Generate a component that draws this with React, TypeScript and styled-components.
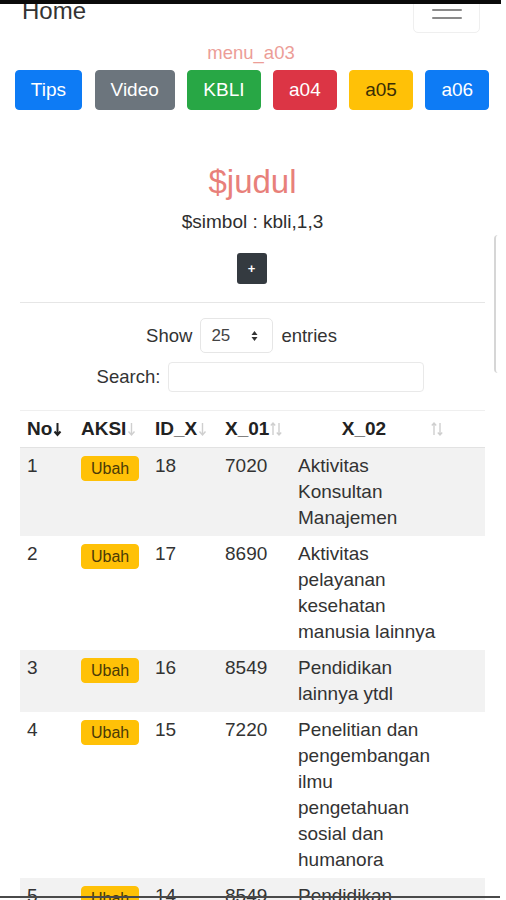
import React from "react";
import styled, { createGlobalStyle } from "styled-components";

const GlobalStyle = createGlobalStyle`
  html, body { margin: 0; padding: 0; background: #fff; }
  body {
    font-family: "Liberation Sans", Arial, sans-serif;
    color: #2b2b2b;
    width: 506px;
    overflow-x: hidden;
  }
`;

const TopEdge = styled.div`
  position: fixed;
  top: 0;
  left: 0;
  width: 501px;
  height: 4px;
  background: #0a0a0a;
  z-index: 10;
`;

const BottomEdge = styled.div`
  position: fixed;
  bottom: 2px;
  left: 0;
  width: 500px;
  height: 2px;
  background: #4a4a4a;
  z-index: 10;
`;

const SideMark = styled.div`
  position: fixed;
  left: 494px;
  top: 235px;
  width: 4px;
  height: 138px;
  border-left: 2px solid #d6d6d6;
  border-radius: 4px 0 0 4px;
  z-index: 5;
`;

const Navbar = styled.nav`
  display: flex;
  justify-content: space-between;
  align-items: flex-start;
  margin-top: -8px;
  padding: 0 26px 0 22px;
`;

const Brand = styled.div`
  font-size: 24px;
  line-height: 28px;
  padding-top: 5px;
  color: #333;
`;

const Toggler = styled.div`
  width: 65px;
  height: 31px;
  border: 1px solid #efefef;
  border-radius: 5px;
  display: flex;
  flex-direction: column;
  align-items: center;
  padding-top: 8px;
  gap: 6px;
  box-sizing: content-box;
`;

const TogglerLine = styled.span`
  display: block;
  width: 30px;
  height: 2px;
  background: #8a8a8a;
  border-radius: 1px;
`;

const MenuTitle = styled.div`
  text-align: center;
  font-size: 18.5px;
  line-height: 22px;
  color: #ec9d97;
  margin-top: 9px;
  padding-right: 4px;
`;

const ButtonRow = styled.div`
  display: flex;
  justify-content: center;
  gap: 12.5px;
  margin-top: 6px;
  padding-right: 2px;
`;

const palette: Record<string, { bg: string; fg: string }> = {
  primary: { bg: "#0d7bf5", fg: "#ffffff" },
  secondary: { bg: "#6c757d", fg: "#ffffff" },
  success: { bg: "#28a745", fg: "#ffffff" },
  danger: { bg: "#dc3545", fg: "#ffffff" },
  warning: { bg: "#ffc107", fg: "#3a2e06" },
};

const MenuButton = styled.button<{ $variant: string }>`
  font-family: "Liberation Sans", Arial, sans-serif;
  font-size: 19px;
  line-height: 24px;
  padding: 7px 15px;
  border-radius: 4px;
  border: 1px solid ${(p) => palette[p.$variant].bg};
  background: ${(p) => palette[p.$variant].bg};
  color: ${(p) => palette[p.$variant].fg};
  cursor: pointer;
`;

const Content = styled.main`
  padding: 0 21px 0 20px;
`;

const Heading = styled.h3`
  margin: 52px 0 0;
  text-align: center;
  font-size: 33px;
  line-height: 40px;
  font-weight: 500;
  color: #e8807a;
`;

const Symbol = styled.div`
  text-align: center;
  font-size: 19px;
  line-height: 24px;
  margin-top: 8px;
  color: #2e2e2e;
`;

const AddRow = styled.div`
  display: flex;
  justify-content: center;
  margin-top: 19px;
  padding-right: 2px;
`;

const AddButton = styled.button`
  width: 30px;
  height: 31px;
  border: none;
  border-radius: 3px;
  background: #343a40;
  color: #fff;
  font-family: "Liberation Sans", Arial, sans-serif;
  font-size: 13px;
  font-weight: bold;
  padding: 0;
  display: flex;
  align-items: center;
  justify-content: center;
`;

const Divider = styled.hr`
  margin: 18px 0 0;
  border: none;
  border-top: 1px solid #e6e6e6;
`;

const ControlRow = styled.div<{ $shift: number }>`
  display: flex;
  justify-content: center;
  align-items: center;
  gap: 8px;
  font-size: 18.5px;
  color: #333;
  padding-left: ${(p) => (p.$shift > 0 ? p.$shift : 0)}px;
  padding-right: ${(p) => (p.$shift < 0 ? -p.$shift : 0)}px;
`;

const LengthRow = styled(ControlRow)`
  margin-top: 15px;
`;

const SearchRow = styled(ControlRow)`
  margin-top: 9px;
`;

const SelectBox = styled.div`
  border: 1px solid #e6e6e6;
  border-radius: 5px;
  display: flex;
  align-items: center;
  justify-content: space-between;
  padding: 0 14px 0 10px;
  box-sizing: border-box;
  width: 73px;
  height: 35px;
  font-size: 17px;
  color: #444;
`;

const SearchInput = styled.div`
  width: 256px;
  height: 30px;
  border: 1px solid #e9e9e9;
  border-radius: 4px;
  box-sizing: border-box;
`;

const Table = styled.table`
  margin-top: 18px;
  width: 465px;
  border-collapse: collapse;
  table-layout: fixed;
  font-size: 19px;
  line-height: 26px;
`;

const Th = styled.th`
  text-align: left;
  font-weight: bold;
  padding: 5px 0 5px 7px;
  border-top: 1px solid #efefef;
  border-bottom: 1px solid #e2e2e2;
  color: #222;
  white-space: nowrap;
  overflow: visible;
`;

const ThInner = styled.div<{ $width?: number }>`
  display: flex;
  align-items: center;
  width: ${(p) => (p.$width ? `${p.$width}px` : "auto")};
`;

const ThLabel = styled.span<{ $center?: boolean }>`
  flex: ${(p) => (p.$center ? 1 : "none")};
  text-align: ${(p) => (p.$center ? "center" : "left")};
`;

const Row = styled.tr<{ $striped: boolean }>`
  background: ${(p) => (p.$striped ? "#f2f2f2" : "#ffffff")};
`;

const Td = styled.td`
  padding: 5px 7px;
  vertical-align: top;
  color: #333;
`;

const Desc = styled.div`
  width: 146px;
`;

const Badge = styled.span`
  display: inline-block;
  margin-top: 3px;
  font-size: 16px;
  line-height: 23px;
  padding: 0 9px;
  border: 1px solid #ffc107;
  background: #ffc107;
  color: #4a3a08;
  border-radius: 4px;
`;

const SortIcon: React.FC<{ mode: "desc" | "faint" | "both" }> = ({ mode }) => {
  const dark = "#222";
  const faint = "#cfcfcf";
  if (mode === "both") {
    return (
      <svg width="12" height="16" viewBox="0 0 12 16" style={{ marginLeft: 1 }}>
        <path d="M3 14V2M0.8 4.5L3 2l2.2 2.5" stroke={faint} strokeWidth="1.4" fill="none" />
        <path d="M9 2v12M6.8 11.5L9 14l2.2-2.5" stroke={faint} strokeWidth="1.4" fill="none" />
      </svg>
    );
  }
  const c = mode === "desc" ? dark : faint;
  return (
    <svg width="9" height="16" viewBox="0 0 9 16" style={{ marginLeft: 1 }}>
      <path d="M4.5 2v12M1.5 10.5L4.5 14l3-3.5" stroke={c} strokeWidth={mode === "desc" ? 2 : 1.4} fill="none" />
    </svg>
  );
};

const SelectArrows = () => (
  <svg width="7" height="12" viewBox="0 0 7 12">
    <path d="M3.5 1L6.5 5H0.5z" fill="#333" />
    <path d="M3.5 11L6.5 7H0.5z" fill="#333" />
  </svg>
);

const rows = [
  { no: 1, id: 18, code: "7020", desc: "Aktivitas Konsultan Manajemen" },
  { no: 2, id: 17, code: "8690", desc: "Aktivitas pelayanan kesehatan manusia lainnya" },
  { no: 3, id: 16, code: "8549", desc: "Pendidikan lainnya ytdl" },
  { no: 4, id: 15, code: "7220", desc: "Penelitian dan pengembangan ilmu pengetahuan sosial dan humanora" },
  { no: 5, id: 14, code: "8549", desc: "Pendidikan lainnya ytdl" },
];

const buttons = [
  { label: "Tips", variant: "primary" },
  { label: "Video", variant: "secondary" },
  { label: "KBLI", variant: "success" },
  { label: "a04", variant: "danger" },
  { label: "a05", variant: "warning" },
  { label: "a06", variant: "primary" },
];

export default function App() {
  return (
    <>
      <GlobalStyle />
      <TopEdge />
      <SideMark />
      <BottomEdge />
      <Navbar>
        <Brand>Home</Brand>
        <Toggler>
          <TogglerLine />
          <TogglerLine />
          <TogglerLine />
        </Toggler>
      </Navbar>
      <MenuTitle>menu_a03</MenuTitle>
      <ButtonRow>
        {buttons.map((b) => (
          <MenuButton key={b.label} $variant={b.variant}>
            {b.label}
          </MenuButton>
        ))}
      </ButtonRow>
      <Content>
        <Heading>$judul</Heading>
        <Symbol>$simbol : kbli,1,3</Symbol>
        <AddRow>
          <AddButton>+</AddButton>
        </AddRow>
        <Divider />
        <LengthRow $shift={-22}>
          <span>Show</span>
          <SelectBox>
            <span>25</span>
            <SelectArrows />
          </SelectBox>
          <span>entries</span>
        </LengthRow>
        <SearchRow $shift={16}>
          <span>Search:</span>
          <SearchInput />
        </SearchRow>
        <Table>
          <colgroup>
            <col style={{ width: 54 }} />
            <col style={{ width: 74 }} />
            <col style={{ width: 70 }} />
            <col style={{ width: 73 }} />
            <col style={{ width: 194 }} />
          </colgroup>
          <thead>
            <tr>
              <Th>
                <ThInner>
                  <ThLabel>No</ThLabel>
                  <SortIcon mode="desc" />
                </ThInner>
              </Th>
              <Th>
                <ThInner>
                  <ThLabel>AKSI</ThLabel>
                  <SortIcon mode="faint" />
                </ThInner>
              </Th>
              <Th>
                <ThInner>
                  <ThLabel>ID_X</ThLabel>
                  <SortIcon mode="faint" />
                </ThInner>
              </Th>
              <Th>
                <ThInner>
                  <ThLabel>X_01</ThLabel>
                  <SortIcon mode="both" />
                </ThInner>
              </Th>
              <Th>
                <ThInner $width={145}>
                  <ThLabel $center>X_02</ThLabel>
                  <SortIcon mode="both" />
                </ThInner>
              </Th>
            </tr>
          </thead>
          <tbody>
            {rows.map((r, i) => (
              <Row key={r.no} $striped={i % 2 === 0}>
                <Td>{r.no}</Td>
                <Td>
                  <Badge>Ubah</Badge>
                </Td>
                <Td>{r.id}</Td>
                <Td>{r.code}</Td>
                <Td>
                  <Desc>{r.desc}</Desc>
                </Td>
              </Row>
            ))}
          </tbody>
        </Table>
      </Content>
    </>
  );
}
